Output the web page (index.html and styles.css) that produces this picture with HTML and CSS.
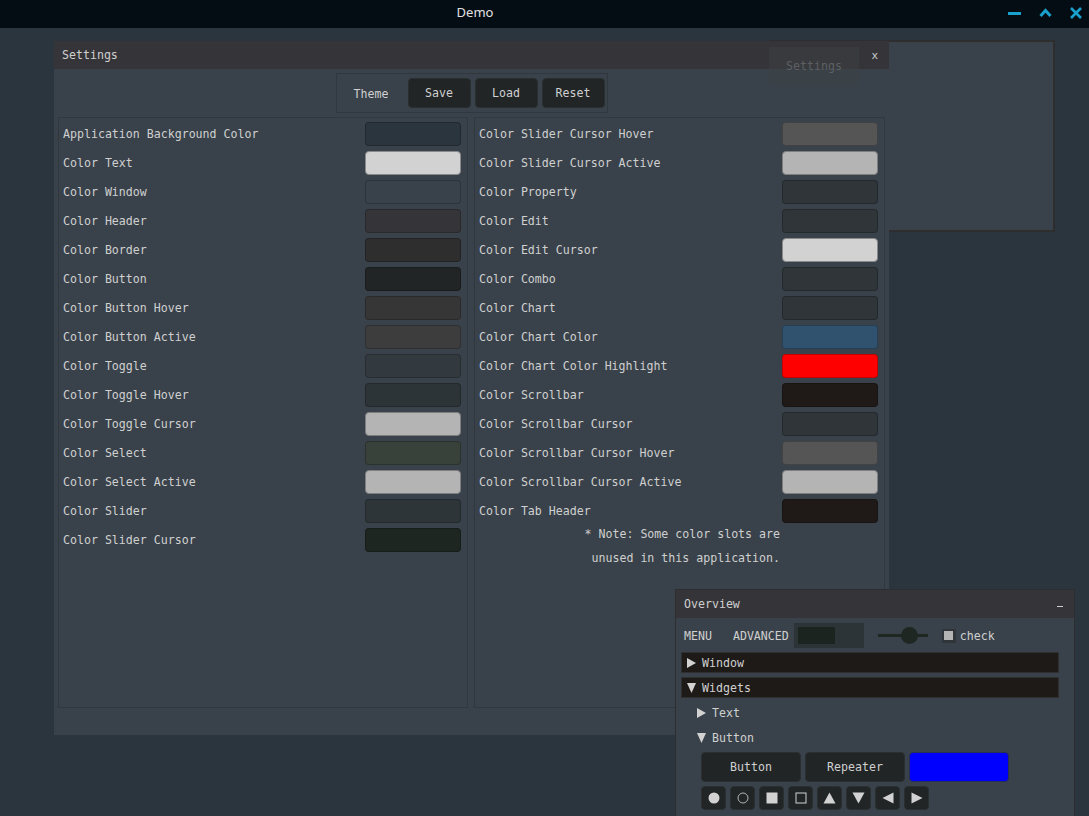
FILE: index.html
```html
<!DOCTYPE html>
<html>
<head>
<meta charset="utf-8">
<title>Demo</title>
<link rel="stylesheet" href="styles.css">
</head>
<body>
<div class="titlebar">
  <span class="app-title">Demo</span>
  <div class="wm-buttons">
    <svg class="wm-icon" width="14" height="10" viewBox="0 0 14 10"><rect x="0" y="4" width="13" height="3" fill="#19a0cc"/></svg>
    <svg class="wm-icon" width="14" height="10" viewBox="0 0 14 10"><path d="M1.5 8 L6.5 2.5 L11.5 8" fill="none" stroke="#19a0cc" stroke-width="3"/></svg>
    <svg class="wm-icon" width="12" height="12" viewBox="0 0 12 12"><path d="M1 1 L11 11 M11 1 L1 11" fill="none" stroke="#19a0cc" stroke-width="2.6"/></svg>
  </div>
</div>

<div class="desktop">
  <div class="win back-win"></div>

  <div class="win settings">
    <div class="win-head">
      <span>Settings</span>
      <span class="head-btn">x</span>
    </div>
    <div class="win-body">
      <div class="theme-bar">
        <span class="theme-label">Theme</span>
        <button class="btn">Save</button>
        <button class="btn">Load</button>
        <button class="btn">Reset</button>
      </div>
      <div class="panels">
        <div class="panel">
          <div class="row"><span>Application Background Color</span><span class="swatch c-appbg"></span></div>
          <div class="row"><span>Color Text</span><span class="swatch c-text"></span></div>
          <div class="row"><span>Color Window</span><span class="swatch c-window"></span></div>
          <div class="row"><span>Color Header</span><span class="swatch c-header"></span></div>
          <div class="row"><span>Color Border</span><span class="swatch c-border"></span></div>
          <div class="row"><span>Color Button</span><span class="swatch c-button"></span></div>
          <div class="row"><span>Color Button Hover</span><span class="swatch c-button-hover"></span></div>
          <div class="row"><span>Color Button Active</span><span class="swatch c-button-active"></span></div>
          <div class="row"><span>Color Toggle</span><span class="swatch c-toggle"></span></div>
          <div class="row"><span>Color Toggle Hover</span><span class="swatch c-toggle-hover"></span></div>
          <div class="row"><span>Color Toggle Cursor</span><span class="swatch c-light"></span></div>
          <div class="row"><span>Color Select</span><span class="swatch c-select"></span></div>
          <div class="row"><span>Color Select Active</span><span class="swatch c-light"></span></div>
          <div class="row"><span>Color Slider</span><span class="swatch c-slider"></span></div>
          <div class="row"><span>Color Slider Cursor</span><span class="swatch c-slider-cursor"></span></div>
        </div>
        <div class="panel">
          <div class="row"><span>Color Slider Cursor Hover</span><span class="swatch c-mid"></span></div>
          <div class="row"><span>Color Slider Cursor Active</span><span class="swatch c-light"></span></div>
          <div class="row"><span>Color Property</span><span class="swatch c-prop"></span></div>
          <div class="row"><span>Color Edit</span><span class="swatch c-prop"></span></div>
          <div class="row"><span>Color Edit Cursor</span><span class="swatch c-text"></span></div>
          <div class="row"><span>Color Combo</span><span class="swatch c-prop"></span></div>
          <div class="row"><span>Color Chart</span><span class="swatch c-prop"></span></div>
          <div class="row"><span>Color Chart Color</span><span class="swatch c-chart"></span></div>
          <div class="row"><span>Color Chart Color Highlight</span><span class="swatch c-red"></span></div>
          <div class="row"><span>Color Scrollbar</span><span class="swatch c-scroll"></span></div>
          <div class="row"><span>Color Scrollbar Cursor</span><span class="swatch c-prop"></span></div>
          <div class="row"><span>Color Scrollbar Cursor Hover</span><span class="swatch c-mid"></span></div>
          <div class="row"><span>Color Scrollbar Cursor Active</span><span class="swatch c-light"></span></div>
          <div class="row"><span>Color Tab Header</span><span class="swatch c-scroll"></span></div>
          <div class="note">
            <div>* Note: Some color slots are</div>
            <div>unused in this application.</div>
          </div>
        </div>
      </div>
    </div>
  </div>

  <div class="ghost">Settings</div>

  <div class="win overview">
    <div class="win-head">
      <span>Overview</span>
      <span class="head-dash"></span>
    </div>
    <div class="ov-body">
      <div class="menubar">
        <span class="menu-item">MENU</span>
        <span class="menu-item adv">ADVANCED</span>
        <span class="prog"><span class="prog-fill"></span></span>
        <span class="slider"><span class="slider-knob"></span></span>
        <span class="check"><span class="check-box"><span class="check-mark"></span></span>check</span>
      </div>
      <div class="tree-head">
        <svg class="tri" width="9" height="10" viewBox="0 0 9 10"><path d="M0 0 L9 5 L0 10 Z" fill="#d2d2d2"/></svg>
        <span>Window</span>
      </div>
      <div class="tree-head">
        <svg class="tri" width="9" height="10" viewBox="0 0 9 10"><path d="M0 0 L9 0 L4.5 10 Z" fill="#d2d2d2"/></svg>
        <span>Widgets</span>
      </div>
      <div class="tree-node">
        <svg class="tri" width="9" height="10" viewBox="0 0 9 10"><path d="M0 0 L9 5 L0 10 Z" fill="#d2d2d2"/></svg>
        <span>Text</span>
      </div>
      <div class="tree-node">
        <svg class="tri" width="9" height="10" viewBox="0 0 9 10"><path d="M0 0 L9 0 L4.5 10 Z" fill="#d2d2d2"/></svg>
        <span>Button</span>
      </div>
      <div class="btn-row">
        <button class="btn wide">Button</button>
        <button class="btn wide">Repeater</button>
        <span class="btn wide blue"></span>
      </div>
      <div class="sym-row">
        <span class="btn sym"><svg width="12" height="12" viewBox="0 0 12 12"><circle cx="6" cy="6" r="5.5" fill="#d2d2d2"/></svg></span>
        <span class="btn sym"><svg width="12" height="12" viewBox="0 0 12 12"><circle cx="6" cy="6" r="5" fill="none" stroke="#b4b4b4" stroke-width="1"/></svg></span>
        <span class="btn sym"><svg width="12" height="12" viewBox="0 0 12 12"><rect x="0.5" y="0.5" width="11" height="11" fill="#d2d2d2"/></svg></span>
        <span class="btn sym"><svg width="12" height="12" viewBox="0 0 12 12"><rect x="1" y="1" width="10" height="10" fill="none" stroke="#d2d2d2" stroke-width="1"/></svg></span>
        <span class="btn sym"><svg width="13" height="12" viewBox="0 0 13 12"><path d="M6.5 0.5 L12.5 11.5 L0.5 11.5 Z" fill="#d2d2d2"/></svg></span>
        <span class="btn sym"><svg width="13" height="12" viewBox="0 0 13 12"><path d="M0.5 0.5 L12.5 0.5 L6.5 11.5 Z" fill="#d2d2d2"/></svg></span>
        <span class="btn sym"><svg width="12" height="12" viewBox="0 0 12 12"><path d="M11.5 0.5 L11.5 11.5 L0.5 6 Z" fill="#d2d2d2"/></svg></span>
        <span class="btn sym"><svg width="12" height="12" viewBox="0 0 12 12"><path d="M0.5 0.5 L0.5 11.5 L11.5 6 Z" fill="#d2d2d2"/></svg></span>
      </div>
    </div>
  </div>
</div>
</body>
</html>
```

FILE: styles.css
```css
* { box-sizing: border-box; }

html, body {
  margin: 0;
  padding: 0;
}

body {
  width: 1089px;
  height: 816px;
  overflow: hidden;
  background: #2b353e;
  font-family: "DejaVu Sans Mono", "Liberation Mono", monospace;
  font-size: 11.6px;
  color: #d0d0d0;
}

.titlebar {
  height: 28px;
  background: #040c14;
  display: flex;
  align-items: center;
  justify-content: center;
  position: relative;
}

.app-title {
  font-family: "Noto Sans", "DejaVu Sans", sans-serif;
  font-size: 13px;
  color: #e2e2e2;
  margin-left: -139px;
  margin-top: -5px;
}

.wm-buttons {
  position: absolute;
  right: 7px;
  top: 7px;
  display: flex;
  gap: 17px;
  align-items: center;
}

.wm-icon { display: block; }

.desktop {
  position: relative;
  height: 788px;
  overflow: hidden;
}

.win {
  position: absolute;
  background: #39424a;
}

.back-win {
  left: 769px;
  top: 12px;
  width: 286px;
  height: 192px;
  border: 2px solid #2e2e2f;
}

.settings {
  left: 54px;
  top: 13px;
  width: 835px;
  height: 694px;
  display: flex;
  flex-direction: column;
}

.win-head {
  height: 28px;
  background: #353539;
  display: flex;
  align-items: center;
  justify-content: space-between;
  padding: 0 11px 0 8px;
  flex: none;
}

.head-btn { font-size: 11px; }

.head-dash {
  width: 6px;
  height: 1px;
  background: #d0d0d0;
  margin-top: 4px;
}

.win-body {
  padding: 4px;
  display: flex;
  flex-direction: column;
  align-items: center;
}

.theme-bar {
  width: 272px;
  height: 40px;
  border: 1px solid #30383e;
  display: flex;
  align-items: center;
  gap: 4px;
  padding: 0 2px 0 0;
}

.theme-label {
  width: 67px;
  text-align: center;
  padding-top: 2px;
  padding-left: 2px;
}

.btn {
  font: inherit;
  color: #d0d0d0;
  background: #212526;
  border: 1px solid #2a3031;
  border-radius: 4px;
  display: flex;
  align-items: center;
  justify-content: center;
  padding: 0;
}

.theme-bar .btn {
  width: 63px;
  height: 30px;
}

.panels {
  margin-top: 4px;
  width: 100%;
  display: grid;
  grid-template-columns: 410px 411px;
  column-gap: 6px;
}

.panel {
  height: 591px;
  border: 1px solid #30383e;
  padding: 4px 6px 0 4px;
  display: flex;
  flex-direction: column;
  gap: 5px;
}

.row {
  height: 24px;
  display: flex;
  align-items: center;
  justify-content: space-between;
}

.swatch {
  width: 96px;
  height: 24px;
  border-radius: 4px;
  border: 1px solid rgba(0, 0, 0, 0.22);
}

.c-appbg { background: #2b353e; }
.c-text { background: #d2d2d2; border-color: #8a8a8a; }
.c-window { background: #39424a; }
.c-header { background: #353539; }
.c-border { background: #2e2e2e; }
.c-button { background: #212526; }
.c-button-hover { background: #363636; }
.c-button-active { background: #3d3d3d; }
.c-toggle { background: #333a3f; }
.c-toggle-hover { background: #2d3438; }
.c-light { background: #b4b4b4; border-color: #7e7e7e; }
.c-select { background: #38413a; }
.c-slider { background: #2e3539; }
.c-slider-cursor { background: #1e2621; }
.c-mid { background: #555555; }
.c-prop { background: #2f3538; }
.c-chart { background: #30526f; }
.c-red { background: #ff0000; }
.c-scroll { background: #1f1a18; }

.note {
  margin-top: -6px;
  padding-right: 98px;
  text-align: right;
  line-height: 24px;
}

.ghost {
  position: absolute;
  left: 769px;
  top: 19px;
  width: 90px;
  height: 39px;
  background: rgba(60, 64, 68, 0.45);
  color: #5c6064;
  display: flex;
  align-items: center;
  justify-content: center;
  padding-bottom: 2px;
}

.overview {
  left: 675px;
  top: 561px;
  width: 400px;
  height: 260px;
  border: 1px solid #2e2e30;
  border-bottom: none;
}

.overview .win-head {
  height: 28px;
  padding: 0 11px 0 8px;
}

.ov-body {
  padding: 5px 16px 0 5px;
  display: flex;
  flex-direction: column;
}

.menubar {
  height: 25px;
  display: flex;
  align-items: center;
  padding-left: 3px;
}

.adv { margin-left: 21px; }

.prog {
  margin-left: 5px;
  width: 70px;
  height: 25px;
  background: #2d3438;
  padding: 4px;
  display: flex;
}

.prog-fill {
  width: 37px;
  height: 17px;
  background: #1c2420;
}

.slider {
  margin-left: 14px;
  width: 50px;
  height: 3px;
  background: #1f2723;
  position: relative;
}

.slider-knob {
  position: absolute;
  left: 23px;
  top: -7px;
  width: 17px;
  height: 17px;
  border-radius: 50%;
  background: #1f2723;
}

.check {
  margin-left: 14px;
  display: flex;
  align-items: center;
  gap: 4px;
}

.check-box {
  width: 14px;
  height: 14px;
  background: #2f3538;
  display: flex;
  align-items: center;
  justify-content: center;
}

.check-mark {
  width: 9px;
  height: 9px;
  background: #b4b4b4;
}

.tree-head {
  margin-top: 4px;
  height: 21px;
  width: 378px;
  background: #1e1a18;
  border: 1px solid #2f2f2f;
  display: flex;
  align-items: center;
  gap: 6px;
  padding-left: 5px;
}

.tri { display: block; flex: none; }

.tree-node {
  height: 21px;
  margin-top: 4px;
  display: flex;
  align-items: center;
  gap: 6px;
  padding-left: 16px;
}

.btn-row {
  margin-top: 4px;
  padding-left: 20px;
  display: flex;
  gap: 4px;
}

.btn.wide {
  width: 100px;
  height: 30px;
}

.btn.blue {
  background: #0000ff;
  border-color: #2a2f55;
}

.sym-row {
  margin-top: 4px;
  padding-left: 20px;
  display: flex;
  gap: 4px;
}

.btn.sym {
  width: 25px;
  height: 24px;
}

.btn.sym svg { display: block; }
```
